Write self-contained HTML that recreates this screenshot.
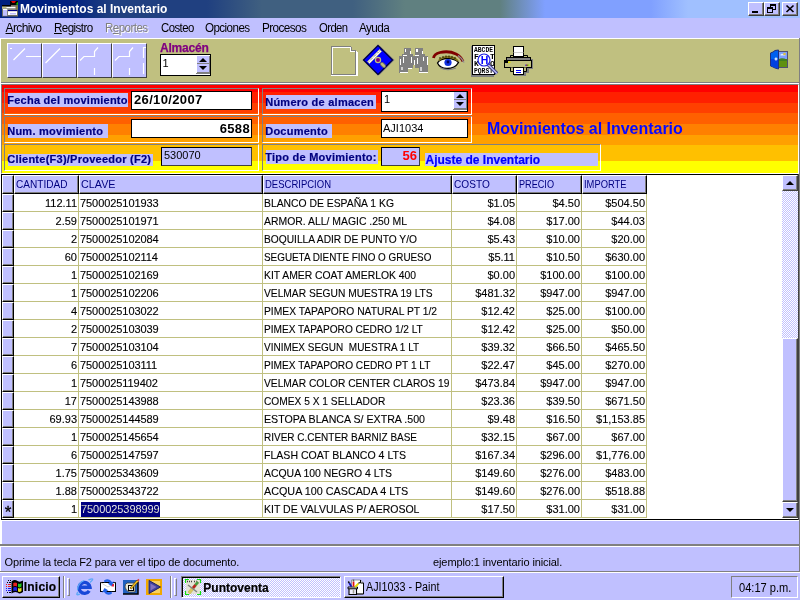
<!DOCTYPE html>
<html><head><meta charset="utf-8"><title>Movimientos al Inventario</title>
<style>
html,body{margin:0;padding:0}
body{will-change:transform;width:800px;height:600px;overflow:hidden;position:relative;background:#c0c0ff;font-family:"Liberation Sans",sans-serif;font-size:11px;color:#000}
div,span,svg{position:absolute;box-sizing:border-box;white-space:nowrap}
span.i{position:static}
#title{left:0;top:0;width:800px;height:18px;background:linear-gradient(to right,#002080 0,#002080 67px,#204080 113px,#204080 207px,#406080 262px,#406080 353px,#608080 405px,#608080 500px,#80a0ff 545px,#80a0ff 651px,#a0c0ff 688px,#a0c0ff 800px)}
#title .t{left:20px;top:0;line-height:18px;font-weight:bold;font-size:12px;color:#fff}
.cb{top:2px;width:16px;height:14px;background:#c0c0ff;border:1px solid;border-color:#fff #404040 #404040 #fff;box-shadow:inset -1px -1px 0 #808080}
#menu{left:0;top:18px;width:800px;height:20px;background:#c0c0ff}
#menu span{transform-origin:0 0;top:0;line-height:21px;font-size:12px;letter-spacing:-0.6px}
#menu span u{text-decoration:underline}
#menu span.dis{color:#808080;text-shadow:1px 1px 0 #fff}
#tb{left:0;top:38px;width:800px;height:44px;background:#c0c080;border-top:1px solid #fff;border-left:1px solid #fff;border-right:1px solid #808080}
.tbb{top:43px;width:35px;height:35px;background:#c0c0ff;border:1px solid;border-color:#fff #404040 #404040 #fff}
.lbl{-webkit-text-stroke:.2px;text-indent:-.8px;background:#c0c0ff;color:#000080;font-weight:bold;font-size:11px;letter-spacing:.25px;line-height:14px;height:14px;padding-left:0}
.fr{border:1px solid;border-color:#808080 #fff #fff #808080}
.inp{background:#fff;border:1px solid #000;font-size:11px}
.inp2{background:#c0c0ff;border:1px solid;border-color:#000 #404040 #404040 #000;font-size:11px}
#grid{left:0;top:0;width:800px;height:600px}
.hc{background:#c0c0ff;border:1px solid;border-color:#fff #000 #000 #fff;box-shadow:inset -1px -1px 0 #808080;color:#000080;font-size:11px;overflow:hidden}
.hc span{left:.7px;top:0;line-height:17px;transform-origin:0 0}
.hc.ind{border-bottom-color:#000}
.hc .star{left:0;width:10px;text-align:center;color:#000;font-size:17px;font-weight:normal;-webkit-text-stroke:.3px;line-height:24px;letter-spacing:0}
.vl{top:194px;width:1px;height:324px;background:#c0c080}
.hl{left:14px;width:633px;height:1px;background:#c0c080}
.c{-webkit-text-stroke:.12px #000;height:17px;line-height:18px;font-size:11px;overflow:hidden}
.c.r{text-align:right;padding-right:1px}
.c.l{padding-left:1px}
.sel{margin-left:1px;position:static;background:#000080;color:#fff;display:inline-block;height:15px;line-height:15px;margin-top:1px}
.btn{background:#c0c0ff;border:1px solid;border-color:#fff #000 #000 #fff;box-shadow:inset -1px -1px 0 #808080}
.sx{position:static;display:inline-block;transform-origin:0 0}
.c.k{letter-spacing:-.07px}
.dth{background:repeating-conic-gradient(#fff 0 25%,#c0c0ff 0 50%) 0 0/2px 2px}

</style></head>
<body>
<div id="title">
<svg style="left:0;top:0" width="19" height="18" viewBox="0 0 19 18">
<rect x="10" y="1" width="8" height="5.500" fill="#000"/>
<path d="M11 1 H16 L14.500 3 H12.500 Z" fill="#e00000"/>
<path d="M18 1.800 V5 L15.700 4.300 Z" fill="#00c000"/>
<rect x="2" y="5" width="16" height="11.500" fill="#707060"/>
<rect x="2" y="5" width="9" height="1.600" fill="#000"/>
<rect x="2" y="6.800" width="13.500" height="1.500" fill="#fff"/>
<rect x="2" y="6.800" width="4.500" height="1.500" fill="#c0c080"/>
<rect x="2.500" y="8.500" width="13" height="1" fill="#a0a0a0"/>
<rect x="3" y="9.200" width="4.200" height="6.600" fill="#c0c0ff"/>
<rect x="3" y="9" width="4.200" height="1" fill="#fff"/>
<rect x="8" y="10" width="9.300" height="1.200" fill="#000080"/>
<rect x="8" y="11.200" width="9" height="3.800" fill="#fff"/>
<rect x="10" y="13" width="6" height="1.500" fill="#c0c0ff"/>
<rect x="16" y="6" width="2" height="3" fill="#808040"/>
</svg>
<span class="t">Movimientos al Inventario</span>
<div class="cb" style="left:748px"><svg width="14" height="12" style="left:0;top:0"><rect x="3" y="8" width="6" height="2" fill="#000"/></svg></div>
<div class="cb" style="left:764px"><svg width="14" height="12" style="left:0;top:0"><rect x="5.500" y="1.500" width="5" height="5" fill="none" stroke="#000"/><rect x="5" y="1" width="6" height="2" fill="#000"/><rect x="2.500" y="4.500" width="5" height="5" fill="#c0c0ff" stroke="#000"/><rect x="2" y="4" width="6" height="2" fill="#000"/></svg></div>
<div class="cb" style="left:782px"><svg width="14" height="12" style="left:0;top:0"><path d="M3.500 2.500 L10.500 9 M10.500 2.500 L3.500 9" stroke="#000" stroke-width="1.700" fill="none"/></svg></div>
</div>
<div id="menu">
<span style="left:5.500px"><u>A</u>rchivo</span>
<span style="left:53.500px;transform:scaleX(.97)"><u>R</u>egistro</span>
<span class="dis" style="left:105px;transform:scaleX(.97)">R<u>e</u>portes</span>
<span style="left:160.500px;transform:scaleX(.95)">Costeo</span>
<span style="left:205.300px;transform:scaleX(.97)">Opciones</span>
<span style="left:262px;transform:scaleX(.98)">Procesos</span>
<span style="left:318.500px;transform:scaleX(.94)">Orden</span>
<span style="left:358.500px;transform:scaleX(.98)">Ayuda</span>
</div>
<div id="tb"></div>
<div style="left:0;top:82px;width:800px;height:1px;background:#808080"></div>
<div style="left:0;top:83px;width:800px;height:1px;background:#fff"></div>
<div style="left:0;top:38px;width:1px;height:137px;background:#fff"></div>
<div class="tbb" style="left:7px"><svg width="33" height="33" style="left:0;top:0"><path d="M2 4.500 H4 M17 4.500 L5.500 16 M18 12.500 H33" stroke="#fff" stroke-width="1.200" fill="none"/></svg></div>
<div class="tbb" style="left:42px"><svg width="33" height="33" style="left:0;top:0"><path d="M17 4.500 L2.500 19 M18 12.500 H33" stroke="#fff" stroke-width="1.200" fill="none"/></svg></div>
<div class="tbb" style="left:77px"><svg width="33" height="33" style="left:0;top:0"><path d="M20 3.500 L16.500 7.500 V12.500 H6 L2 16.500 M16.500 24 V31" stroke="#fff" stroke-width="1.200" fill="none"/></svg></div>
<div class="tbb" style="left:112px"><svg width="33" height="33" style="left:0;top:0"><path d="M20 3.500 L16.500 7.500 V12.500 H6 L2 16.500 M16.500 24 V31 M33 3.500 H30.500 V14 M30.500 19 V30" stroke="#fff" stroke-width="1.200" fill="none"/></svg></div>
<span style="left:160px;top:41px;line-height:14px;font-weight:bold;font-size:12px;color:#800080;letter-spacing:-.2px;-webkit-text-stroke:.25px">Almacén</span>
<div class="inp" style="left:160px;top:54px;width:51px;height:22px"><span style="left:1.500px;top:1px;line-height:14px">1</span>
<div style="left:36px;top:1px;width:13px;height:8px;background:#c0c0ff;border-right:1px solid #808080;border-bottom:1px solid #808080"><svg width="12" height="7" style="left:0;top:0"><path d="M2 6 L6 2 L10 6 Z" fill="#000"/></svg></div>
<div style="left:36px;top:9px;width:13px;height:9px;background:#c0c0ff;border-right:1px solid #808080;border-bottom:1px solid #808080"><svg width="12" height="8" style="left:0;top:0"><path d="M2 2 L6 6 L10 2 Z" fill="#000"/></svg></div>
<div style="left:35px;top:18px;width:14px;height:1px;background:#808080"></div>
</div>
<svg style="left:331px;top:46px" width="28" height="31" viewBox="0 0 28 31" shape-rendering="crispEdges">
<path d="M0.500 29 V0.500 H20" stroke="#808080" fill="none"/>
<path d="M1.500 29 V1.500 H20" stroke="#fff" fill="none"/>
<path d="M19.500 1 V5.500 H25" stroke="#fff" fill="none"/>
<path d="M20.500 1 V4.500 H25" stroke="#808080" fill="none"/>
<path d="M24.500 5 V28.500 H1" stroke="#808080" fill="none"/>
<path d="M25.500 5 V29.500 H0" stroke="#fff" fill="none"/>
<path d="M26.500 6 V29.500" stroke="#fff" fill="none"/>
</svg>
<svg style="left:361px;top:43px" width="36" height="36" viewBox="0 0 36 36">
<path d="M18.500 2.500 L33.500 17 L18.500 32 L16.500 30 Z" fill="#808080"/>
<path d="M2.500 17 L17 2.500 L31.500 17 L17 31.500 Z" fill="#0000ff" stroke="#000040" stroke-width="1.300"/>
<path d="M6.500 18.500 L18.500 6.500 L20.500 8.500 L8.500 20.500 Z" fill="#fff" stroke="#c0c080" stroke-width=".8"/>
<path d="M8 18.500 L18.500 8" stroke="#404040" stroke-width="1" stroke-dasharray="1 1"/>
<circle cx="17" cy="17" r="2.600" fill="#800080" stroke="#c0c080" stroke-width="1.200"/>
<path d="M21 21 L23 23" stroke="#707060" stroke-width="4" stroke-linecap="round"/>
<path d="M21 21 L23 23" stroke="#c0c080" stroke-width="2.400" stroke-linecap="round"/>
</svg>
<svg style="left:399px;top:48px" width="30" height="26" viewBox="0 0 30 26" shape-rendering="crispEdges">
<path d="M4.500 0 H12 V6 H13.500 V8 H15.500 V0 H23.500 V6 H25.500 V8 H28.500 V25 H19.500 V20 H15.500 V17 H13.500 V20 H9 V25 H0 V8 H2.500 V6 H4.500 Z" fill="#808080"/>
<path d="M5.500 1 H7 V4 H5.500 Z M10.500 3 H12 V6 H10.500 Z M17 1 H18.500 V4 H17 Z M22.500 3 H24 V6 H22.500 Z" fill="#fff"/>
<path d="M3.500 6.500 H7.500 V7.500 H3.500 Z M15.500 6.500 H19.500 V7.500 H15.500 Z" fill="#fff"/>
<path d="M0.500 11 H1.500 V17 H0.500 Z M3.500 9 H4.500 V15 H3.500 Z M11.500 9 H12.500 V15 H11.500 Z M15 12 H16 V17 H15 Z M17.500 9.500 H18.500 V16 H17.500 Z M24 9 H25 V13 H24 Z M27.500 9 H28.500 V17 H27.500 Z" fill="#fff"/>
<path d="M1.500 19 H3.500 V22 H1.500 Z M20.500 19 H23 V22.500 H20.500 Z" fill="#d0d0d0"/>
<path d="M0.500 24 H9 V25 H0.500 Z M20 24 H28.500 V25 H20 Z M9 19.500 H12.500 V20.500 H9 Z" fill="#fff"/>
</svg>
<svg style="left:431px;top:48px" width="36" height="24" viewBox="0 0 36 24">
<path d="M2.500 10 Q3 6 9 4.500 Q18 2.500 25 6 Q30 8.500 32 13.500" stroke="#800000" stroke-width="2.800" fill="none"/>
<path d="M27 7.500 Q31.500 10.500 33 14.500" stroke="#909090" stroke-width="1.500" fill="none"/>
<path d="M6.500 15 Q9 10.500 17 10.500 Q24 10.500 27.500 14.500 Q24 20.500 16 20.500 Q9 20.500 6.500 15 Z" fill="#fff" stroke="#000" stroke-width="1.300"/>
<path d="M8 12.500 Q12 8.500 18 9 Q24 9.500 27 13" stroke="#807018" stroke-width="1.800" fill="none"/>
<path d="M9 11 V9 M12 10 V8 M15 9.500 V7.500 M18 9.500 V7.500 M21 10 V8 M24 11 V9" stroke="#202000" stroke-width="1"/>
<circle cx="17" cy="14.500" r="3.600" fill="#1030e0"/>
<circle cx="17" cy="14" r="1.400" fill="#000060"/>
<path d="M9 19.500 Q16 23.500 25 20" stroke="#808080" stroke-width="1.200" fill="none"/>
</svg>
<svg style="left:470px;top:44px" width="30" height="34" viewBox="0 0 30 34">
<rect x="1" y="2" width="23" height="31" fill="#808080"/>
<rect x="2.500" y="1.500" width="22" height="29" fill="#fff" stroke="#000"/>
<text x="4" y="8" font-family="Liberation Mono,monospace" font-size="8" font-weight="bold" fill="#000" textLength="19" lengthAdjust="spacingAndGlyphs">ABCDE</text>
<text x="4" y="15" font-family="Liberation Mono,monospace" font-size="8" font-weight="bold" fill="#000">F</text>
<text x="20" y="15" font-family="Liberation Mono,monospace" font-size="8" font-weight="bold" fill="#000">T</text>
<text x="4" y="21.500" font-family="Liberation Mono,monospace" font-size="8" font-weight="bold" fill="#000">K</text>
<text x="20" y="21.500" font-family="Liberation Mono,monospace" font-size="8" font-weight="bold" fill="#000">O</text>
<text x="4" y="28.500" font-family="Liberation Mono,monospace" font-size="8" font-weight="bold" fill="#000" textLength="19" lengthAdjust="spacingAndGlyphs">PQRST</text>
<path d="M18 20.500 L27 29.500" stroke="#404080" stroke-width="3.400"/>
<path d="M18 20.500 L27 29.500" stroke="#c0c0ff" stroke-width="1.200"/>
<circle cx="14" cy="16" r="6" fill="#fff" stroke="#2020e0" stroke-width="1.200"/>
<text x="10.800" y="20" font-family="Liberation Sans,sans-serif" font-size="10.500" font-weight="bold" fill="#0000ff">H</text>
</svg>
<svg style="left:502px;top:45px" width="32" height="32" viewBox="0 0 32 32">
<path d="M4 22 H9 V27 H12 V31 H24 V28 H27 V24 H31 V14 H29 V22 Z" fill="#808080"/>
<path d="M8.500 10.500 H25.500 V13 H8.500 Z" fill="#c0c080" stroke="#000"/>
<rect x="11.500" y="1.500" width="10" height="10" fill="#fff" stroke="#000"/>
<path d="M11.500 7.500 H21.500" stroke="#c0c0c0" stroke-width=".8"/>
<rect x="4.500" y="12.500" width="24" height="3" fill="#808080" stroke="#000"/>
<rect x="2.500" y="15.500" width="27" height="7" fill="#c0c080" stroke="#000"/>
<rect x="3" y="16" width="3" height="2" fill="#000"/>
<rect x="6" y="16.500" width="2.500" height="1.500" fill="#e0e000"/>
<rect x="23.500" y="19.500" width="1" height="1.500" fill="#0000e0"/><rect x="24.500" y="19.500" width="1" height="1.500" fill="#e00000"/><rect x="25.500" y="19.500" width="1" height="1.500" fill="#00c000"/><rect x="26.500" y="19.500" width="1" height="1.500" fill="#e0e000"/>
<path d="M8.500 22.500 V26.500 H11.500 V29.500 H21.500 V26.500 H24.500 V22.500" fill="#c0c080" stroke="#000"/>
<rect x="11.500" y="22.500" width="10" height="7" fill="#fff" stroke="#000"/>
<path d="M14 25.500 H19 M14 27.500 H19" stroke="#0000ff" stroke-width="1"/>
</svg>
<svg style="left:769px;top:49px" width="20" height="21" viewBox="0 0 20 21">
<rect x="9.500" y="2.500" width="9" height="16" fill="#80a0ff" stroke="#505070"/>
<rect x="10" y="10" width="8" height="8" fill="#609010"/>
<path d="M10 10 Q13 8.500 18 10.500 L18 12 L10 12 Z" fill="#408020"/>
<path d="M11.500 5.500 Q13 4 14.500 5.500 Q16 5 16.500 6.500 L11.500 6.500 Z" fill="#e0f0ff"/>
<circle cx="15.500" cy="5" r="1.300" fill="#e0c040"/>
<path d="M1.500 4 L4 3 L6 1.500 L9.500 1 V20 L6 19 L4 18 L1.500 17 Z" fill="#0060f0" stroke="#203080" stroke-width="1"/>
<path d="M2 10 L9 10 L9 19.500 L6 18.500 L2 17 Z" fill="#0040e0"/>
<path d="M7 8.500 V11.500 M5.500 10 H8.500" stroke="#fff" stroke-width="1.200"/>
</svg>

<div id="gp" style="left:1px;top:84px;width:798px;height:90px;border:1px solid;border-color:#808080 #fff #fff #808080;background:linear-gradient(to bottom,#ff0000 0,#ff0000 7px,#ff2000 7px,#ff2000 18px,#ff4000 18px,#ff4000 28px,#ff6000 28px,#ff6000 39px,#ff8000 39px,#ff8000 50px,#ffa000 50px,#ffa000 60px,#ffc000 60px,#ffc000 76px,#ffff00 76px,#ffff00 88px)"></div>
<div class="fr" style="left:4px;top:88px;width:255px;height:27px"></div>
<div class="fr" style="left:4px;top:116px;width:255px;height:27px"></div>
<div class="fr" style="left:4px;top:144px;width:255px;height:27px"></div>
<div class="fr" style="left:262px;top:88px;width:210px;height:27px"></div>
<div class="fr" style="left:262px;top:116px;width:210px;height:27px"></div>
<div class="fr" style="left:262px;top:144px;width:339px;height:27px"></div>
<div class="lbl" style="left:8px;top:93px;width:120px">Fecha del movimiento</div>
<div class="lbl" style="left:8px;top:124px;width:100px">Num. movimiento</div>
<div class="lbl" style="left:8px;top:154px;width:145px;height:12px;line-height:10px">Cliente(F3)/Proveedor (F2)</div>
<div class="lbl" style="left:266px;top:95px;width:110px">Número de almacen</div>
<div class="lbl" style="left:266px;top:124px;width:66px">Documento</div>
<div class="lbl" style="left:266px;top:150px;width:112px">Tipo de Movimiento:</div>
<div class="inp" style="left:131px;top:91px;width:121px;height:19px"><span style="left:2px;top:-1px;line-height:17px;font-weight:bold;font-size:13px;letter-spacing:.35px">26/10/2007</span></div>
<div class="inp" style="left:131px;top:119px;width:121px;height:19px"><span style="right:1px;top:0;line-height:17px;font-weight:bold;font-size:13px;letter-spacing:.35px">6588</span></div>
<div class="inp2" style="left:161px;top:147px;width:91px;height:19px"><span style="left:2px;top:0;line-height:15px;color:#000">530070</span></div>
<div class="inp" style="left:381px;top:91px;width:87px;height:21px"><span style="left:2px;top:0;line-height:14px">1</span>
<div style="left:72px;top:0px;width:13px;height:8px;background:#c0c0ff;border-right:1px solid #808080;border-bottom:1px solid #808080"><svg width="12" height="7" style="left:0;top:0"><path d="M2 6 L6 2 L10 6 Z" fill="#000"/></svg></div>
<div style="left:72px;top:8px;width:13px;height:9px;background:#c0c0ff;border-right:1px solid #808080;border-bottom:1px solid #808080"><svg width="12" height="8" style="left:0;top:0"><path d="M2 2 L6 6 L10 2 Z" fill="#000"/></svg></div>
<div style="left:71px;top:17px;width:14px;height:1px;background:#808080"></div>
</div>
<div class="inp" style="left:381px;top:119px;width:87px;height:19px"><span style="left:1px;top:1px;line-height:15px">AJI1034</span></div>
<div class="inp2" style="left:381px;top:147px;width:39px;height:19px"><span style="right:2px;top:0;line-height:16px;font-weight:bold;font-size:13px;color:#ff0000">56</span></div>
<div class="lbl" style="left:425px;top:153px;width:173px;height:13px;line-height:15px;font-size:12px;color:#0000ff;letter-spacing:0;text-indent:.5px">Ajuste de Inventario</div>
<span style="left:487px;top:119px;line-height:20px;font-weight:bold;font-size:16px;color:#0808ff;letter-spacing:-.03px">Movimientos al Inventario</span>
<div style="left:0;top:174px;width:1px;height:346px;background:#fff"></div>
<div style="left:1px;top:174px;width:798px;height:346px;background:#fff;border:1px solid #000"></div>

<div id="grid">
<div class="hc ind" style="left:2px;top:175px;width:12px;height:19px"></div>
<div class="hc" style="left:14px;top:175px;width:65px;height:19px"><span style="transform:scaleX(0.916)">CANTIDAD</span></div>
<div class="vl" style="left:78px"></div>
<div class="hc" style="left:79px;top:175px;width:184px;height:19px"><span style="transform:scaleX(0.978)">CLAVE</span></div>
<div class="vl" style="left:262px"></div>
<div class="hc" style="left:263px;top:175px;width:189px;height:19px"><span style="transform:scaleX(0.864)">DESCRIPCION</span></div>
<div class="vl" style="left:451px"></div>
<div class="hc" style="left:452px;top:175px;width:65px;height:19px"><span style="transform:scaleX(0.919)">COSTO</span></div>
<div class="vl" style="left:516px"></div>
<div class="hc" style="left:517px;top:175px;width:65px;height:19px"><span style="transform:scaleX(0.83)">PRECIO</span></div>
<div class="vl" style="left:581px"></div>
<div class="hc" style="left:582px;top:175px;width:65px;height:19px"><span style="transform:scaleX(0.851)">IMPORTE</span></div>
<div class="vl" style="left:646px"></div>
<div class="hc ind" style="left:2px;top:194px;width:12px;height:18px"></div>
<div class="hl" style="top:211px"></div>
<div class="c r" style="left:14px;top:194px;width:64px">112.11</div>
<div class="c l k" style="left:79px;top:194px;width:183px">7500025101933</div>
<div class="c l" style="left:263px;top:194px;width:188px"><span class="sx" style="transform:scaleX(0.942)">BLANCO DE ESPAÑA 1 KG</span></div>
<div class="c r" style="left:452px;top:194px;width:64px">$1.05</div>
<div class="c r" style="left:517px;top:194px;width:64px">$4.50</div>
<div class="c r" style="left:582px;top:194px;width:64px">$504.50</div>
<div class="hc ind" style="left:2px;top:212px;width:12px;height:18px"></div>
<div class="hl" style="top:229px"></div>
<div class="c r" style="left:14px;top:212px;width:64px">2.59</div>
<div class="c l k" style="left:79px;top:212px;width:183px">7500025101971</div>
<div class="c l" style="left:263px;top:212px;width:188px"><span class="sx" style="transform:scaleX(0.947)">ARMOR. ALL/ MAGIC .250 ML</span></div>
<div class="c r" style="left:452px;top:212px;width:64px">$4.08</div>
<div class="c r" style="left:517px;top:212px;width:64px">$17.00</div>
<div class="c r" style="left:582px;top:212px;width:64px">$44.03</div>
<div class="hc ind" style="left:2px;top:230px;width:12px;height:18px"></div>
<div class="hl" style="top:247px"></div>
<div class="c r" style="left:14px;top:230px;width:64px">2</div>
<div class="c l k" style="left:79px;top:230px;width:183px">7500025102084</div>
<div class="c l" style="left:263px;top:230px;width:188px"><span class="sx" style="transform:scaleX(0.929)">BOQUILLA ADIR DE PUNTO Y/O</span></div>
<div class="c r" style="left:452px;top:230px;width:64px">$5.43</div>
<div class="c r" style="left:517px;top:230px;width:64px">$10.00</div>
<div class="c r" style="left:582px;top:230px;width:64px">$20.00</div>
<div class="hc ind" style="left:2px;top:248px;width:12px;height:18px"></div>
<div class="hl" style="top:265px"></div>
<div class="c r" style="left:14px;top:248px;width:64px">60</div>
<div class="c l k" style="left:79px;top:248px;width:183px">7500025102114</div>
<div class="c l" style="left:263px;top:248px;width:188px"><span class="sx" style="transform:scaleX(0.899)">SEGUETA DIENTE FINO O GRUESO</span></div>
<div class="c r" style="left:452px;top:248px;width:64px">$5.11</div>
<div class="c r" style="left:517px;top:248px;width:64px">$10.50</div>
<div class="c r" style="left:582px;top:248px;width:64px">$630.00</div>
<div class="hc ind" style="left:2px;top:266px;width:12px;height:18px"></div>
<div class="hl" style="top:283px"></div>
<div class="c r" style="left:14px;top:266px;width:64px">1</div>
<div class="c l k" style="left:79px;top:266px;width:183px">7500025102169</div>
<div class="c l" style="left:263px;top:266px;width:188px"><span class="sx" style="transform:scaleX(0.942)">KIT AMER COAT AMERLOK 400</span></div>
<div class="c r" style="left:452px;top:266px;width:64px">$0.00</div>
<div class="c r" style="left:517px;top:266px;width:64px">$100.00</div>
<div class="c r" style="left:582px;top:266px;width:64px">$100.00</div>
<div class="hc ind" style="left:2px;top:284px;width:12px;height:18px"></div>
<div class="hl" style="top:301px"></div>
<div class="c r" style="left:14px;top:284px;width:64px">1</div>
<div class="c l k" style="left:79px;top:284px;width:183px">7500025102206</div>
<div class="c l" style="left:263px;top:284px;width:188px"><span class="sx" style="transform:scaleX(0.93)">VELMAR SEGUN MUESTRA 19 LTS</span></div>
<div class="c r" style="left:452px;top:284px;width:64px">$481.32</div>
<div class="c r" style="left:517px;top:284px;width:64px">$947.00</div>
<div class="c r" style="left:582px;top:284px;width:64px">$947.00</div>
<div class="hc ind" style="left:2px;top:302px;width:12px;height:18px"></div>
<div class="hl" style="top:319px"></div>
<div class="c r" style="left:14px;top:302px;width:64px">4</div>
<div class="c l k" style="left:79px;top:302px;width:183px">7500025103022</div>
<div class="c l" style="left:263px;top:302px;width:188px"><span class="sx" style="transform:scaleX(0.935)">PIMEX TAPAPORO NATURAL PT 1/2</span></div>
<div class="c r" style="left:452px;top:302px;width:64px">$12.42</div>
<div class="c r" style="left:517px;top:302px;width:64px">$25.00</div>
<div class="c r" style="left:582px;top:302px;width:64px">$100.00</div>
<div class="hc ind" style="left:2px;top:320px;width:12px;height:18px"></div>
<div class="hl" style="top:337px"></div>
<div class="c r" style="left:14px;top:320px;width:64px">2</div>
<div class="c l k" style="left:79px;top:320px;width:183px">7500025103039</div>
<div class="c l" style="left:263px;top:320px;width:188px"><span class="sx" style="transform:scaleX(0.919)">PIMEX TAPAPORO CEDRO 1/2 LT</span></div>
<div class="c r" style="left:452px;top:320px;width:64px">$12.42</div>
<div class="c r" style="left:517px;top:320px;width:64px">$25.00</div>
<div class="c r" style="left:582px;top:320px;width:64px">$50.00</div>
<div class="hc ind" style="left:2px;top:338px;width:12px;height:18px"></div>
<div class="hl" style="top:355px"></div>
<div class="c r" style="left:14px;top:338px;width:64px">7</div>
<div class="c l k" style="left:79px;top:338px;width:183px">7500025103104</div>
<div class="c l" style="left:263px;top:338px;width:188px"><span class="sx" style="transform:scaleX(0.907)">VINIMEX SEGUN&nbsp; MUESTRA 1 LT</span></div>
<div class="c r" style="left:452px;top:338px;width:64px">$39.32</div>
<div class="c r" style="left:517px;top:338px;width:64px">$66.50</div>
<div class="c r" style="left:582px;top:338px;width:64px">$465.50</div>
<div class="hc ind" style="left:2px;top:356px;width:12px;height:18px"></div>
<div class="hl" style="top:373px"></div>
<div class="c r" style="left:14px;top:356px;width:64px">6</div>
<div class="c l k" style="left:79px;top:356px;width:183px">7500025103111</div>
<div class="c l" style="left:263px;top:356px;width:188px"><span class="sx" style="transform:scaleX(0.922)">PIMEX TAPAPORO CEDRO PT 1 LT</span></div>
<div class="c r" style="left:452px;top:356px;width:64px">$22.47</div>
<div class="c r" style="left:517px;top:356px;width:64px">$45.00</div>
<div class="c r" style="left:582px;top:356px;width:64px">$270.00</div>
<div class="hc ind" style="left:2px;top:374px;width:12px;height:18px"></div>
<div class="hl" style="top:391px"></div>
<div class="c r" style="left:14px;top:374px;width:64px">1</div>
<div class="c l k" style="left:79px;top:374px;width:183px">7500025119402</div>
<div class="c l" style="left:263px;top:374px;width:188px"><span class="sx" style="transform:scaleX(0.93)">VELMAR COLOR CENTER CLAROS 19</span></div>
<div class="c r" style="left:452px;top:374px;width:64px">$473.84</div>
<div class="c r" style="left:517px;top:374px;width:64px">$947.00</div>
<div class="c r" style="left:582px;top:374px;width:64px">$947.00</div>
<div class="hc ind" style="left:2px;top:392px;width:12px;height:18px"></div>
<div class="hl" style="top:409px"></div>
<div class="c r" style="left:14px;top:392px;width:64px">17</div>
<div class="c l k" style="left:79px;top:392px;width:183px">7500025143988</div>
<div class="c l" style="left:263px;top:392px;width:188px"><span class="sx" style="transform:scaleX(0.927)">COMEX 5 X 1 SELLADOR</span></div>
<div class="c r" style="left:452px;top:392px;width:64px">$23.36</div>
<div class="c r" style="left:517px;top:392px;width:64px">$39.50</div>
<div class="c r" style="left:582px;top:392px;width:64px">$671.50</div>
<div class="hc ind" style="left:2px;top:410px;width:12px;height:18px"></div>
<div class="hl" style="top:427px"></div>
<div class="c r" style="left:14px;top:410px;width:64px">69.93</div>
<div class="c l k" style="left:79px;top:410px;width:183px">7500025144589</div>
<div class="c l" style="left:263px;top:410px;width:188px"><span class="sx" style="transform:scaleX(0.967)">ESTOPA BLANCA S/ EXTRA .500</span></div>
<div class="c r" style="left:452px;top:410px;width:64px">$9.48</div>
<div class="c r" style="left:517px;top:410px;width:64px">$16.50</div>
<div class="c r" style="left:582px;top:410px;width:64px">$1,153.85</div>
<div class="hc ind" style="left:2px;top:428px;width:12px;height:18px"></div>
<div class="hl" style="top:445px"></div>
<div class="c r" style="left:14px;top:428px;width:64px">1</div>
<div class="c l k" style="left:79px;top:428px;width:183px">7500025145654</div>
<div class="c l" style="left:263px;top:428px;width:188px"><span class="sx" style="transform:scaleX(0.907)">RIVER C.CENTER BARNIZ BASE</span></div>
<div class="c r" style="left:452px;top:428px;width:64px">$32.15</div>
<div class="c r" style="left:517px;top:428px;width:64px">$67.00</div>
<div class="c r" style="left:582px;top:428px;width:64px">$67.00</div>
<div class="hc ind" style="left:2px;top:446px;width:12px;height:18px"></div>
<div class="hl" style="top:463px"></div>
<div class="c r" style="left:14px;top:446px;width:64px">6</div>
<div class="c l k" style="left:79px;top:446px;width:183px">7500025147597</div>
<div class="c l" style="left:263px;top:446px;width:188px"><span class="sx" style="transform:scaleX(0.96)">FLASH COAT BLANCO 4 LTS</span></div>
<div class="c r" style="left:452px;top:446px;width:64px">$167.34</div>
<div class="c r" style="left:517px;top:446px;width:64px">$296.00</div>
<div class="c r" style="left:582px;top:446px;width:64px">$1,776.00</div>
<div class="hc ind" style="left:2px;top:464px;width:12px;height:18px"></div>
<div class="hl" style="top:481px"></div>
<div class="c r" style="left:14px;top:464px;width:64px">1.75</div>
<div class="c l k" style="left:79px;top:464px;width:183px">7500025343609</div>
<div class="c l" style="left:263px;top:464px;width:188px"><span class="sx" style="transform:scaleX(0.949)">ACQUA 100 NEGRO 4 LTS</span></div>
<div class="c r" style="left:452px;top:464px;width:64px">$149.60</div>
<div class="c r" style="left:517px;top:464px;width:64px">$276.00</div>
<div class="c r" style="left:582px;top:464px;width:64px">$483.00</div>
<div class="hc ind" style="left:2px;top:482px;width:12px;height:18px"></div>
<div class="hl" style="top:499px"></div>
<div class="c r" style="left:14px;top:482px;width:64px">1.88</div>
<div class="c l k" style="left:79px;top:482px;width:183px">7500025343722</div>
<div class="c l" style="left:263px;top:482px;width:188px"><span class="sx" style="transform:scaleX(0.98)">ACQUA 100 CASCADA 4 LTS</span></div>
<div class="c r" style="left:452px;top:482px;width:64px">$149.60</div>
<div class="c r" style="left:517px;top:482px;width:64px">$276.00</div>
<div class="c r" style="left:582px;top:482px;width:64px">$518.88</div>
<div class="hc ind" style="left:2px;top:500px;width:12px;height:18px"><span class="star">*</span></div>
<div class="hl" style="top:517px"></div>
<div class="c r" style="left:14px;top:500px;width:64px">1</div>
<div class="c l k" style="left:79px;top:500px;width:183px"><span class="sel">7500025398999</span></div>
<div class="c l" style="left:263px;top:500px;width:188px"><span class="sx" style="transform:scaleX(0.956)">KIT DE VALVULAS P/ AEROSOL</span></div>
<div class="c r" style="left:452px;top:500px;width:64px">$17.50</div>
<div class="c r" style="left:517px;top:500px;width:64px">$31.00</div>
<div class="c r" style="left:582px;top:500px;width:64px">$31.00</div>
</div>
<!--SCROLL-->
<div class="dth" style="left:782px;top:175px;width:16px;height:343px"></div>
<div class="btn" style="left:782px;top:175px;width:16px;height:16px;border-color:#fff #404040 #404040 #fff"><svg width="14" height="14" style="left:0;top:0"><path d="M3 9 L7 5 L11 9 Z" fill="#000"/></svg></div>
<div class="btn" style="left:782px;top:338px;width:16px;height:164px;border-color:#fff #404040 #404040 #fff"></div>
<div class="btn" style="left:782px;top:502px;width:16px;height:16px;border-color:#fff #404040 #404040 #fff"><svg width="14" height="14" style="left:0;top:0"><path d="M3 5 L7 9 L11 5 Z" fill="#000"/></svg></div>
<div style="left:798px;top:174px;width:1px;height:346px;background:#404040"></div>
<!--BOTTOM-->
<div style="left:0;top:520px;width:799px;height:24px;background:#c0c0ff;border-top:1px solid #fff;border-left:2px solid #fff"></div>
<div style="left:0;top:544px;width:800px;height:2px;background:#808080"></div>
<div style="left:0;top:546px;width:799px;height:25px;background:#c0c0ff;border-top:1px solid #fff;border-left:1px solid #fff"></div>
<span style="left:4.500px;top:555px;line-height:14px;letter-spacing:-.14px">Oprime la tecla F2 para ver el tipo de documento.</span>
<span style="left:433px;top:555px;line-height:14px;letter-spacing:-.1px">ejemplo:1 inventario inicial.</span>
<div style="left:0;top:571px;width:800px;height:1px;background:#808080"></div>
<div style="left:0;top:572px;width:800px;height:1px;background:#fff"></div>
<div style="left:799px;top:38px;width:1px;height:534px;background:#808080"></div>
<!--TASKBAR-->
<div class="btn" style="left:2px;top:576px;width:58px;height:22px">
<svg width="19" height="16" style="left:2px;top:2px" viewBox="0 0 19 16">
<path d="M6.500 2.500 Q9.500 0 12.500 2 Q15 3.500 18 1.500 V13 Q15 15.500 12.500 13.500 Q9.500 12 6.500 14.500 Z" fill="#000"/>
<path d="M8.300 4 Q10 3 12 4 V7.500 Q10 6.500 8.300 7.500 Z" fill="#e82020"/>
<path d="M13 4.500 Q14.500 5.500 16.500 4 V7.500 Q14.500 9 13 8 Z" fill="#20c820"/>
<path d="M8.300 8.500 Q10 7.500 12 8.500 V12 Q10 11 8.300 12 Z" fill="#2020e8"/>
<path d="M13 9 Q14.500 10 16.500 8.500 V12 Q14.500 13.500 13 12.500 Z" fill="#e8e020"/>
<path d="M1 5.500h1M3 5.500h3M1 7.500h1M3 7.500h3" stroke="#e82020" stroke-width="1" shape-rendering="crispEdges"/>
<path d="M1 9.500h1M3 9.500h3M1 11.500h1M3 11.500h3" stroke="#2020e8" stroke-width="1" shape-rendering="crispEdges"/>
<path d="M2 3.500h1M4 3.500h2M2 13.500h1M4 13.500h2M3 1.500h1M5 1.500h1" stroke="#000" stroke-width="1" shape-rendering="crispEdges"/>
</svg>
<span style="left:20.800px;top:3px;line-height:14px;font-weight:bold;font-size:12px;letter-spacing:.2px;-webkit-text-stroke:.2px">Inicio</span></div>
<div style="left:63px;top:576px;width:2px;height:22px;border-left:1px solid #808080;border-right:1px solid #fff"></div>
<div style="left:67px;top:578px;width:3px;height:18px;border:1px solid;border-color:#fff #808080 #808080 #fff"></div>
<div style="left:170px;top:576px;width:2px;height:22px;border-left:1px solid #808080;border-right:1px solid #fff"></div>
<div style="left:174px;top:578px;width:3px;height:18px;border:1px solid;border-color:#fff #808080 #808080 #fff"></div>
<svg style="left:75px;top:578px" width="20" height="18" viewBox="0 0 20 18">
<path d="M14.200 12.800 A5.500 5.500 0 1 1 15 9.300 H5.500" fill="none" stroke="#1848d8" stroke-width="3.400"/>
<path d="M3 14 Q0 18 5 16 M15 4.500 Q21 -1 13.500 2" fill="none" stroke="#60a8f8" stroke-width="1.500"/>
<path d="M2.500 12 Q3 5 9 2.500" fill="none" stroke="#60a8f8" stroke-width="1.200"/>
</svg>
<svg style="left:98px;top:578px" width="20" height="18" viewBox="0 0 20 18">
<rect x="2.500" y="4.500" width="15" height="9" fill="#fff" stroke="#000"/>
<path d="M2.500 4.500 L10 9 L17.500 4.500" fill="none" stroke="#b0b0b0" stroke-width=".6"/>
<rect x="13.500" y="6" width="2.500" height="2.500" fill="#e02040"/>
<path d="M6 2.500 Q11 -0.500 14 4 L16 3.500 L13.500 8 L9.500 5.500 L11.800 5 Q10 2.800 6.500 4.500 Z" fill="#2060e8"/>
<path d="M14 15.500 Q9 18.500 6 14 L4 14.500 L6.500 10 L10.500 12.500 L8.200 13 Q10 15.200 13.500 13.500 Z" fill="#2060e8"/>
</svg>
<svg style="left:122px;top:578px" width="18" height="18" viewBox="0 0 18 18">
<rect x="1" y="2" width="15" height="14" fill="#2060c0"/>
<path d="M1 16 H16 V4" stroke="#000" stroke-width="1.500" fill="none"/>
<path d="M5 5 H13 V14 H7 Q4 13 3 9 Q3 6 5 5 Z" fill="#e8e8d8" stroke="#404040" stroke-width=".8"/>
<rect x="6.500" y="7.500" width="5" height="5" fill="#f8f8f0" stroke="#000"/>
<path d="M8 10 L15 2 L16.500 3.500 L9.500 11 Z" fill="#f0c020" stroke="#604000" stroke-width=".7"/>
<path d="M15 2 L16.500 0.800 L17.500 2 L16.500 3.500 Z" fill="#e04040"/>
</svg>
<svg style="left:145px;top:578px" width="18" height="18" viewBox="0 0 18 18">
<rect x="1" y="1" width="16" height="16" fill="#f0a800"/>
<rect x="3" y="3" width="12" height="12" fill="#f8d060"/>
<path d="M4 2.500 L15.500 9 L4 15.500 Z" fill="#4040a0" stroke="#202060" stroke-width="1"/>
<path d="M5.500 5.500 L11.500 9 L5.500 12.500 Z" fill="#8070c0"/>
</svg>

<div class="dth" style="left:181px;top:576px;width:160px;height:22px;border:1px solid;border-color:#808080 #fff #fff #808080;box-shadow:inset 1px 1px 0 #000"></div>
<svg style="left:185px;top:579px" width="17" height="17" viewBox="0 0 17 17">
<rect x="1" y="1" width="14" height="14" fill="#e4e4d8"/>
<path d="M0.500 4 V0.500 H4 M12 0.500 H15.500 V4 M15.500 12 V15.500 H12 M4 15.500 H0.500 V12" fill="none" stroke="#10e010" stroke-width="1.200"/>
<path d="M2 2.500 H7 M9 2.500 H13" stroke="#404040" stroke-width="1.500" stroke-dasharray="1 1"/>
<path d="M4 14 L13 3" stroke="#a0a060" stroke-width="3"/>
<path d="M4 14 L8 9" stroke="#d8c860" stroke-width="3"/>
<path d="M8 9 L10.500 6" stroke="#c02020" stroke-width="2.500"/>
<path d="M10.500 6 L13 3" stroke="#40a040" stroke-width="2"/>
<path d="M3 6 L12 13" stroke="#808080" stroke-width="1.500"/>
</svg>

<span style="left:203.300px;top:580.700px;line-height:14px;font-weight:bold;font-size:12px;letter-spacing:0;-webkit-text-stroke:.2px">Puntoventa</span>
<div class="btn" style="left:344px;top:576px;width:160px;height:22px"></div>
<svg style="left:347px;top:578px" width="19" height="18" viewBox="0 0 19 18">
<path d="M4.500 2 H13.500 L16.500 5 V16 H4.500 Z" fill="#fff" stroke="#808080" stroke-width=".8"/>
<path d="M13.500 2 V5 H16.500 M16.500 5 V16 H4.500" fill="none" stroke="#000" stroke-width="1"/>
<path d="M2 10.500 H9.500 V16.500 H2 Z" fill="#f0f0ff" stroke="#000" stroke-width="1.100"/>
<path d="M1 9 H10.500 V10.800 H1 Z" fill="#fff" stroke="#000" stroke-width="1"/>
<path d="M6.500 12 V15.500" stroke="#a0a090" stroke-width="1.500"/>
<path d="M4.300 8.500 L2.300 5" stroke="#1010c0" stroke-width="1.800"/>
<path d="M2.300 5 L1.300 3.500" stroke="#000" stroke-width="1.400"/>
<path d="M6.500 8.500 V3.500" stroke="#e01010" stroke-width="1.800"/>
<path d="M6.500 3.500 V1.500" stroke="#606060" stroke-width="1.400"/>
<path d="M8 9 L11.500 5.500" stroke="#e8e000" stroke-width="1.800"/>
<path d="M11.500 5.500 L12.800 4.200" stroke="#303030" stroke-width="1.400"/>
</svg>

<span style="left:365.500px;top:580px;line-height:14px;font-size:12px;transform-origin:0 0;transform:scaleX(.895)">AJI1033 - Paint</span>
<div style="left:731px;top:576px;width:67px;height:22px;border:1px solid;border-color:#808080 #fff #fff #808080"></div>
<span style="left:738.500px;top:581px;line-height:14px;font-size:12px;transform-origin:0 0;transform:scaleX(.925)">04:17 p.m.</span>

</body></html>
